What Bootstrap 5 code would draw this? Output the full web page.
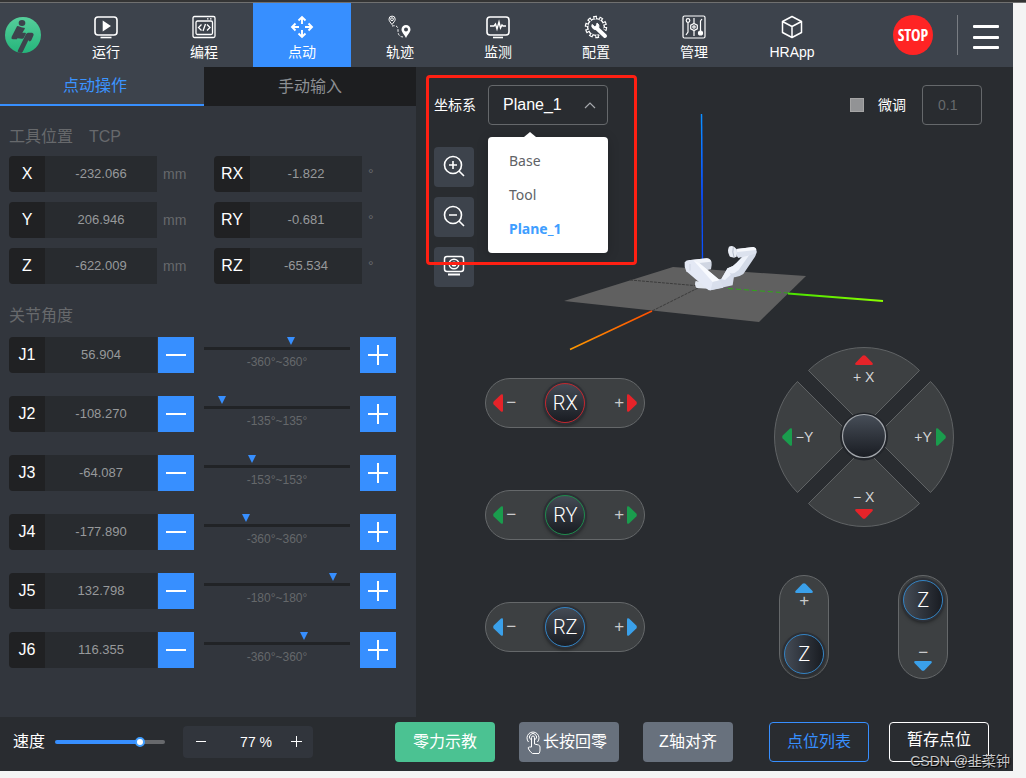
<!DOCTYPE html>
<html lang="zh-CN">
<head>
<meta charset="utf-8">
<meta name="viewport" content="width=device-width, initial-scale=1">
<title>点动</title>
<link href="https://cdn.jsdelivr.net/npm/bootstrap@5.3.0/dist/css/bootstrap.min.css" rel="stylesheet">
<style>
:root{--blue:#378fff;--bar:#3d434c;--side:#32363d;--stage:#292c30;--ink:#202123;--field:#282b2f}
body{background:#f4f4f4;font-family:"Liberation Sans","Noto Sans CJK SC",sans-serif;font-size:14px;line-height:20px;color:#fff}
button{font-family:inherit;color:inherit;border:0;background:none;padding:0}
svg{display:block}
.frame-top{height:3px;background:#343434;border-bottom:1px solid #707070}
.app{margin-right:13px;background:var(--stage)}
.topbar{height:64px;background:var(--bar);padding:0 14px 0 5px}
.topnav{margin-left:16px}
.topnav a{width:98px;height:64px;padding-top:12px;gap:3px;color:#fff;text-decoration:none}
.topnav a.on{background:var(--blue)}
.stop{width:40px;height:40px;border-radius:50%;background:#ff2424;font:bold 16px/40px "Liberation Sans Narrow","Open Sans Condensed","Roboto Condensed","Noto Sans",sans-serif;margin-right:24px}
.rule{width:1px;height:40px;background:#797d83;margin-right:15px}
.burger{width:26px;height:24px}
.burger i{height:3px;border-radius:1px;background:#fff}
.side{width:416px;background:var(--side);padding-bottom:49px}
.tabs button{height:39px;font-size:16px;background:#1d1e20;color:#8d9094;flex:1}
.tabs button.on{flex:0 0 204px;background:var(--bar);color:#3b94ff;border-bottom:2px solid var(--blue);padding-right:14px}
.side-body{padding:0 20px 0 9px}
.sec{font-size:16px;line-height:20px;color:#67696c;margin:21px 0 9px;font-weight:400}
.tcp + .sec{margin:22px 0 11px}
.tcp{display:grid;grid-template-columns:205px 1fr;row-gap:10px}
.axis{width:36px;height:36px;line-height:35px;font-size:16px;text-align:center;background:var(--ink);border-radius:4px 0 0 4px}
.val{width:112px;height:36px;border:0;border-radius:0;background:var(--field);color:#97999b;font-size:13px;text-align:center;padding:0 0 2px}
.unit{color:#67696c;margin-left:6px}
.joints{display:flex;flex-direction:column;gap:23px}
.step{width:36px;height:36px;background:var(--blue)}
.val + .step{margin-left:1px}
.meter{flex:1;margin:0 10px;height:36px;padding-top:10px;font-size:12px;line-height:16px;color:#65686b;text-align:center;position:relative}
.meter::before{content:"";display:block;height:3px;background:#212326;margin-bottom:4px}
.meter i{position:absolute;top:0;margin-left:-4px;border:4px solid transparent;border-top:8px solid var(--blue);border-bottom:0}
.stage{position:relative;min-width:0}
.stage-top{padding:18px 31px 0 18px}
.frame{width:120px;height:40px;border:1px solid #65686b;border-radius:4px;background-color:transparent;color:#fff;font-size:16px;padding:0 14px;appearance:none}
.cs{background:url("data:image/svg+xml,%3Csvg xmlns='http://www.w3.org/2000/svg' width='12' height='8'%3E%3Cpath d='M1 7l5-5 5 5' fill='none' stroke='%23a5a8ac' stroke-width='1.2'/%3E%3C/svg%3E") no-repeat right 11px center}
.fine{width:60px;font-size:14px;color:#67696c;padding:0 15px}
.tick{appearance:none;width:14px;height:14px;background:#929395;border:1px solid #a5a5a5;margin:0 14px 0 0}
.pop{position:absolute;top:52px;left:0;width:120px;padding:7px 0;background:#fff;border-radius:4px;z-index:3;box-shadow:0 2px 12px #0003}
.pop::before{content:"";position:absolute;left:36px;top:-5px;border:6px solid transparent;border-top:0;border-bottom:5px solid #fff}
.pop button{height:34px;padding-left:21px;text-align:left;color:#606266;font-family:"Noto Sans","Noto Sans CJK SC",sans-serif}
.pop button.on{color:#409eff;font-weight:700}
.viewrow{padding:22px 18px 0;height:222px}
.tools{gap:10px}
.tool{width:40px;height:40px;border-radius:4px;background:var(--bar)}
.scene{margin-left:90px;overflow:visible}
.note{position:absolute;left:10px;top:8px;width:211px;height:190px;border:3px solid #ff2013;border-radius:4px;z-index:4;pointer-events:none}
.pill{width:160px;height:50px;border:1px solid #65686a;border-radius:25px;background:#3d4042;padding:0 7px}
.pill.up{width:50px;height:104px;padding:4px 0}
.pill button{color:#c9cacb;font-size:17px;line-height:16px;gap:3px}
.pill.up button{gap:0;padding:3px 0}
.knob{width:40px;height:40px;border-radius:50%;border:1px solid var(--c);background:linear-gradient(#444b55,#191c22);box-shadow:0 0 0 2px #2d3036,0 2px 4px #000a;font:300 20px/38px Roboto,"Liberation Sans",sans-serif;text-align:center}
.up .knob{background:linear-gradient(90deg,#444b55,#191c22)}
.r{--c:#c4262e;--a:#e62329}.g{--c:#1d8b4c;--a:#1a9c4d}.b{--c:#3283c4;--a:#3aa0ea}
.arr{fill:var(--a)}
.pads{gap:62px;padding-top:31px}
.dial{width:180px;height:180px;display:grid;grid-template:repeat(3,60px)/repeat(3,60px);position:relative}
.dial>svg{position:absolute;inset:0}
.dial button{position:relative;display:flex;align-items:center;color:#d4d5d6;font-size:14px;line-height:16px}
.zz{gap:69px;margin-top:48px}
.foot{height:54px;padding:0 24px 4px 13px}
.speed{appearance:none;width:110px;height:16px;background:none;margin:0 18px 0 10px}
.speed::-webkit-slider-runnable-track{height:4px;border-radius:2px;background:linear-gradient(90deg,var(--blue) 77%,#67696c 77%)}
.speed::-webkit-slider-thumb{appearance:none;width:10px;height:10px;margin-top:-3px;border:2px solid #409eff;border-radius:50%;background:#fff}
.count{width:130px;height:32px;border-radius:4px;background:#31353c}
.count button{width:34px;height:32px}
.count input{width:62px;border:0;background:none;color:#fff;text-align:right;padding:0 7px 0 0}
.acts{gap:24px}
.points{gap:20px;margin-left:36px}
.act{width:100px;height:40px;border-radius:4px;font-size:16px;background:#68717d;color:#fff}
.act.go{background:#4bc292}
.act.slim{width:90px}
.act.list{background:none;border:1px solid var(--blue);color:var(--blue)}
.act.save{background:none;border:1px solid #fff;padding-bottom:5px}
.mark-csdn{position:absolute;right:3px;bottom:0;color:#c3c4c6;text-shadow:1px 1px 1px #000}
</style>
</head>
<body>
<div class="frame-top"></div>
<div class="app position-relative">
<header class="topbar d-flex align-items-center">
  <svg width="36" height="36" viewBox="15 51 108 108"><defs><linearGradient id="lg" x2="0" y2="1"><stop stop-color="#56cf9b"/><stop offset="1" stop-color="#25b57b"/></linearGradient><clipPath id="lc"><circle cx="69" cy="105" r="54"/></clipPath></defs><circle cx="69" cy="105" r="54" fill="url(#lg)"/><g clip-path="url(#lc)" fill="#3d434c"><ellipse cx="66" cy="69" rx="10" ry="9"/><path d="M51 79Q53 77 56 79Q66 84 73 83Q76 84 74 87L67 98H76Q79 99 77 103L71 114Q69 117 65 116L52 115L51 118H38Q32 116 35 110z"/><path d="M84 98H96Q103 100 100 107L94 121Q91 125 88 124L85 121L68 156Q64 162 55 158Q52 155 54 151L77 104Q79 99 84 98z"/></g></svg>
  <nav class="topnav d-flex">
    <a href="#" class="d-flex flex-column align-items-center"><svg width="24" height="24" fill="none" stroke="#fff" stroke-width="1.6"><rect x="1" y="2" width="22" height="18" rx="3"/><path d="M9.5 7v8l6-4z" fill="#fff"/><path d="M6.500 22.500h11"/></svg><span>运行</span></a>
    <a href="#" class="d-flex flex-column align-items-center"><svg width="24" height="24" fill="none" stroke="#fff" stroke-width="1.3"><rect x="1" y="1.500" width="22" height="21" rx="1.500"/><rect x="4" y="6" width="16.500" height="13.500" rx="1.500"/><path d="M9.500 9.500l-3 3 3 3M15 9.500l3 3-3 3M13.500 9l-2.500 7M15 3.800h1.500M18 3.800h1.500"/></svg><span>编程</span></a>
    <a href="#" class="on d-flex flex-column align-items-center"><svg width="24" height="24" fill="none" stroke="#fff" stroke-width="1.900"><path d="M12 9V2M8.500 5.500L12 2l3.500 3.500M12 15v7M8.500 18.500L12 22l3.500-3.500M9 12H2M5.500 8.500L2 12l3.500 3.500M15 12h7M18.500 8.500L22 12l-3.500 3.500"/></svg><span>点动</span></a>
    <a href="#" class="d-flex flex-column align-items-center"><svg width="24" height="24" fill="none" stroke="#fff"><path d="M4 9.500C2.500 7.500 1 6 1 4.200a3 3 0 0 1 6.200 0C7.200 6 5.500 7.500 4 9.500z"/><circle cx="4" cy="4.200" r="1.400"/><path d="M4 11c5-1 6 1 6 4s0 7 6 7" stroke-dasharray="2.500 1.500"/><path d="M18 23c-2-4-4.500-6-4.500-8.500a4.500 4.500 0 0 1 9 0C22.500 17 20 19 18 23zm0-10.500a2 2 0 1 0 0 4 2 2 0 0 0 0-4z" fill="#fff" fill-rule="evenodd" stroke="none"/></svg><span>轨迹</span></a>
    <a href="#" class="d-flex flex-column align-items-center"><svg width="24" height="24" fill="none" stroke="#fff" stroke-width="1.600"><rect x="1" y="2" width="22" height="18" rx="3"/><path d="M4 11h4l1.500-2 1.500 5 2-7 1.500 6 1.500-3 1 1h3" stroke-width="1.400"/><path d="M7 22.500h10"/></svg><span>监测</span></a>
    <a href="#" class="d-flex flex-column align-items-center"><svg width="24" height="24" fill="none" stroke="#fff"><circle cx="12" cy="12" r="9.500" stroke-width="3.400" stroke-dasharray="3.600 2.370"/><circle cx="12" cy="12" r="8.400" stroke-width="1.400"/><circle cx="12" cy="12" r="8.800" stroke="#3d434c" stroke-width="2.400" stroke-dasharray="1.400 4.129" stroke-dashoffset="-1"/><path d="M14 14l9 8" stroke="#3d434c" stroke-width="7"/><path d="M12.500 13l8.500 8" stroke-width="4" stroke-linecap="round"/><path d="M8 9.500a3.800 3.800 0 0 0 5.500 4.500 3.500 3.500 0 0 0-.5-6l-.5 3-2 .5z" fill="#fff"/></svg><span>配置</span></a>
    <a href="#" class="d-flex flex-column align-items-center"><svg width="24" height="24" fill="none" stroke="#fff" stroke-width="1.200"><rect x="1" y="1" width="22" height="22" rx="1.500"/><circle cx="6" cy="5.500" r="1.800"/><path d="M6 7.500V17l-2 3M12 3v5M12 16v5M20 4l-1.500 2v10"/><path d="M12 8.500l3.300 1.700v3.600L12 15.500l-3.300-1.700v-3.600z"/><circle cx="12" cy="12" r="1.200"/><circle cx="18.500" cy="18" r="2" fill="#fff"/></svg><span>管理</span></a>
    <a href="#" class="d-flex flex-column align-items-center"><svg width="24" height="24" fill="none" stroke="#fff" stroke-width="1.500" stroke-linejoin="round"><path d="M12 1.500l9.500 5v11L12 22.500l-9.500-5v-11zM2.500 6.500l9.500 5 9.500-5M12 11.500v11"/></svg><span>HRApp</span></a>
  </nav>
  <button class="stop ms-auto">STOP</button>
  <div class="rule"></div>
  <button class="burger mt-1 d-flex flex-column justify-content-between" aria-label="菜单"><i class="w-100"></i><i class="w-100"></i><i class="w-100"></i></button>
</header>

<main class="d-flex">
<section class="side flex-shrink-0">
  <div class="tabs d-flex"><button class="on">点动操作</button><button>手动输入</button></div>
  <div class="side-body">
    <h2 class="sec">工具位置<span class="ms-3">TCP</span></h2>
    <div class="tcp">
      <div class="d-flex align-items-center"><label class="axis" for="x">X</label><input class="val" id="x" value="-232.066"><span class="unit">mm</span></div>
      <div class="d-flex align-items-center"><label class="axis" for="rx">RX</label><input class="val" id="rx" value="-1.822"><span class="unit">°</span></div>
      <div class="d-flex align-items-center"><label class="axis" for="y">Y</label><input class="val" id="y" value="206.946"><span class="unit">mm</span></div>
      <div class="d-flex align-items-center"><label class="axis" for="ry">RY</label><input class="val" id="ry" value="-0.681"><span class="unit">°</span></div>
      <div class="d-flex align-items-center"><label class="axis" for="z">Z</label><input class="val" id="z" value="-622.009"><span class="unit">mm</span></div>
      <div class="d-flex align-items-center"><label class="axis" for="rz">RZ</label><input class="val" id="rz" value="-65.534"><span class="unit">°</span></div>
    </div>
    <h2 class="sec">关节角度</h2>
    <svg width="0" height="0" class="position-absolute"><defs><symbol id="mi" viewBox="0 0 36 36"><path d="M8 18h20" stroke="#fff" stroke-width="2"/></symbol><symbol id="pl" viewBox="0 0 36 36"><path d="M8 18h20M18 8v20" stroke="#fff" stroke-width="2"/></symbol>
    <symbol id="al" viewBox="0 0 10 18"><path d="M10 1.500v15q0 2-2 1L.7 10.500q-1-1.500 0-3L8 .5q2-1 2 1z"/></symbol><symbol id="ar" viewBox="0 0 10 18"><path d="M0 1.500v15q0 2 2 1l7.300-7q1-1.500 0-3L2 .5q-2-1-2 1z"/></symbol><symbol id="au" viewBox="0 0 18 10"><path d="M1.500 10h15q2 0 1-2L10.500.7q-1.500-1-3 0L.5 8q-1 2 1 2z"/></symbol><symbol id="ad" viewBox="0 0 18 10"><path d="M1.500 0h15q2 0 1 2l-7 7.300q-1.500 1-3 0L.5 2q-1-2 1-2z"/></symbol></defs></svg>
    <div class="joints">
      <div class="d-flex"><label class="axis" for="j1">J1</label><input class="val" id="j1" value="56.904"><button class="step" aria-label="J1 减"><svg width="36" height="36"><use href="#mi"/></svg></button><div class="meter"><i style="left:59.4%"></i>-360°~360°</div><button class="step" aria-label="J1 加"><svg width="36" height="36"><use href="#pl"/></svg></button></div>
      <div class="d-flex"><label class="axis" for="j2">J2</label><input class="val" id="j2" value="-108.270"><button class="step" aria-label="J2 减"><svg width="36" height="36"><use href="#mi"/></svg></button><div class="meter"><i style="left:12.4%"></i>-135°~135°</div><button class="step" aria-label="J2 加"><svg width="36" height="36"><use href="#pl"/></svg></button></div>
      <div class="d-flex"><label class="axis" for="j3">J3</label><input class="val" id="j3" value="-64.087"><button class="step" aria-label="J3 减"><svg width="36" height="36"><use href="#mi"/></svg></button><div class="meter"><i style="left:32.7%"></i>-153°~153°</div><button class="step" aria-label="J3 加"><svg width="36" height="36"><use href="#pl"/></svg></button></div>
      <div class="d-flex"><label class="axis" for="j4">J4</label><input class="val" id="j4" value="-177.890"><button class="step" aria-label="J4 减"><svg width="36" height="36"><use href="#mi"/></svg></button><div class="meter"><i style="left:28.9%"></i>-360°~360°</div><button class="step" aria-label="J4 加"><svg width="36" height="36"><use href="#pl"/></svg></button></div>
      <div class="d-flex"><label class="axis" for="j5">J5</label><input class="val" id="j5" value="132.798"><button class="step" aria-label="J5 减"><svg width="36" height="36"><use href="#mi"/></svg></button><div class="meter"><i style="left:88.1%"></i>-180°~180°</div><button class="step" aria-label="J5 加"><svg width="36" height="36"><use href="#pl"/></svg></button></div>
      <div class="d-flex"><label class="axis" for="j6">J6</label><input class="val" id="j6" value="116.355"><button class="step" aria-label="J6 减"><svg width="36" height="36"><use href="#mi"/></svg></button><div class="meter"><i style="left:68.6%"></i>-360°~360°</div><button class="step" aria-label="J6 加"><svg width="36" height="36"><use href="#pl"/></svg></button></div>
    </div>
  </div>
</section>

<section class="stage flex-grow-1">
  <div class="stage-top d-flex align-items-center">
    <label for="cs">坐标系</label>
    <div class="position-relative ms-2 ps-1 me-auto"><div class="position-relative"><select id="cs" class="frame cs d-block"><option>Plane_1</option><option>Base</option><option>Tool</option></select>
      <div class="pop d-flex flex-column"><button>Base</button><button>Tool</button><button class="on">Plane_1</button></div></div></div>
    <input type="checkbox" id="ft" class="tick"><label for="ft" class="me-3">微调</label>
    <input class="frame fine" value="0.1" aria-label="微调步长">
  </div>
  <div class="viewrow d-flex">
    <div class="tools d-flex flex-column">
      <button class="tool" aria-label="放大"><svg width="40" height="40" fill="none" stroke="#fff" stroke-width="1.600"><circle cx="19" cy="18" r="8.500"/><path d="M25 24l5 5M15 18h8M19 14v8"/></svg></button>
      <button class="tool" aria-label="缩小"><svg width="40" height="40" fill="none" stroke="#fff" stroke-width="1.600"><circle cx="19" cy="18" r="8.500"/><path d="M25 24l5 5M15 18h8"/></svg></button>
      <button class="tool" aria-label="复位视角"><svg width="40" height="40" fill="none" stroke="#fff" stroke-width="1.500"><rect x="10.500" y="9.500" width="19" height="15" rx="2.500"/><circle cx="20" cy="17" r="4.800"/><circle cx="20" cy="17" r="1.800"/><path d="M14 27.500h12" stroke-width="2"/></svg></button>
    </div>
    <svg class="scene flex-shrink-0" width="320" height="205" viewBox="564 147 320 205">
      <defs><linearGradient id="zb" gradientUnits="userSpaceOnUse" x1="0" y1="114" x2="0" y2="258"><stop stop-color="#0b96ff"/><stop offset=".7" stop-color="#0a3cff"/><stop offset="1" stop-color="#0600ff"/></linearGradient><linearGradient id="gb" gradientUnits="userSpaceOnUse" x1="728" y1="0" x2="884" y2="0"><stop stop-color="#1fd000"/><stop offset="1" stop-color="#8cff00"/></linearGradient><linearGradient id="ob" gradientUnits="userSpaceOnUse" x1="652" y1="0" x2="570" y2="0"><stop stop-color="#ff4e00"/><stop offset="1" stop-color="#ff9a00"/></linearGradient></defs>
      <path d="M564 301L673 267L806 276L759 322z" fill="#606060"/>
      <path d="M630 280L700 286M698 288L652 311" stroke="#3c3c3c" stroke-dasharray="3 1" fill="none"/>
      <path d="M652 311L570 349.500" stroke="url(#ob)" stroke-width="1.500"/>
      <path d="M728 288.500L788 293" stroke="#2fa818" stroke-dasharray="5 3"/>
      <path d="M788 293.500L883 301" stroke="url(#gb)" stroke-width="1.800"/>
      <path d="M701.500 114L702.500 260" stroke="#0a50ff" stroke-width="1.300"/><path d="M701.500 114L702 200" stroke="url(#zb)" stroke-width="1.300"/>
      <g transform="translate(550 100) scale(.3333)">
        <path d="M437 543L475 550V566L440 564Q432 555 437 543z" fill="#e3e8f1"/>
        <path d="M415 481L470 475Q487 476 485 495L483 508L455 513L430 500z" fill="#d0d6e2"/><path d="M415 481L470 475Q480 476 483 485L440 490z" fill="#f0f3f9"/>
        <path d="M488 540L514 537L533 504L552 530L548 556L480 571z" fill="#d6dcea"/><path d="M514 537L533 504L545 522L525 540z" fill="#eef2f9"/>
        <path d="M533 505Q550 500 560 488L590 455L618 450Q622 458 615 470L580 522Q560 536 545 530z" fill="#d3dae7"/><path d="M533 505Q550 500 560 488L590 460L600 462L566 510Q550 525 538 518z" fill="#eef2fa"/>
        <path d="M560 447L610 441Q622 445 619 460L600 466L565 474Q552 460 560 447z" fill="#dce2ee"/><path d="M560 447L610 441Q619 443 619 450L562 456z" fill="#f6f8fc"/>
        <path d="M537 440Q545 436 553 441L560 448V470L552 473L540 470Q530 455 537 440z" fill="#e9edf5"/><path d="M550 442q-4 14 2 29" stroke="#b3bbc9" stroke-width="3" fill="none"/>
        <path d="M404 487Q410 477 430 481L448 489L508 540L485 569Q480 573 474 569L409 514Q402 500 404 487z" fill="#e4e9f5"/><path d="M430 481L448 489L510 541L488 546z" fill="#f8fafe"/><path d="M488 546L510 541L520 563L482 571z" fill="#d9dfec"/><path d="M420 492v20" stroke="#c8cfdc" stroke-width="2"/>
      </g>
    </svg>
  </div>
  <div class="row g-0">
    <div class="col-6 d-flex flex-column align-items-center pads">
      <div class="pill r d-flex align-items-center justify-content-between"><button class="d-flex align-items-center"><svg class="arr" width="10" height="18"><use href="#al"/></svg>−</button><div class="knob">RX</div><button class="d-flex align-items-center">+<svg class="arr" width="10" height="18"><use href="#ar"/></svg></button></div>
      <div class="pill g d-flex align-items-center justify-content-between"><button class="d-flex align-items-center"><svg class="arr" width="10" height="18"><use href="#al"/></svg>−</button><div class="knob">RY</div><button class="d-flex align-items-center">+<svg class="arr" width="10" height="18"><use href="#ar"/></svg></button></div>
      <div class="pill b d-flex align-items-center justify-content-between"><button class="d-flex align-items-center"><svg class="arr" width="10" height="18"><use href="#al"/></svg>−</button><div class="knob">RZ</div><button class="d-flex align-items-center">+<svg class="arr" width="10" height="18"><use href="#ar"/></svg></button></div>
    </div>
    <div class="col-6 d-flex flex-column align-items-center">
      <div class="dial">
        <svg width="180" height="180"><defs><linearGradient id="kn" x2="0" y2="1"><stop stop-color="#474e58"/><stop offset="1" stop-color="#191c22"/></linearGradient></defs><g fill="#3d4042" stroke="#606365"><path d="M90 79L34.500 23.500A78.500 78.500 0 0 1 145.500 23.500z"/><path d="M90 101L34.500 156.500A78.500 78.500 0 0 0 145.500 156.500z"/><path d="M79 90L23.500 34.500A78.500 78.500 0 0 0 23.500 145.500z"/><path d="M101 90L156.500 34.500A78.500 78.500 0 0 1 156.500 145.500z"/></g><circle cx="90" cy="89.500" r="24" fill="#22252a"/><circle cx="90" cy="89" r="21.500" fill="url(#kn)" stroke="#a2a6ab" stroke-width="1.200"/></svg>
        <span></span><button class="r flex-column pt-2"><svg class="arr mb-1" width="18" height="10"><use href="#au"/></svg><span>+ X</span></button><span></span>
        <button class="g ps-2"><svg class="arr me-1" width="10" height="18"><use href="#al"/></svg>−Y</button><span></span><button class="g pe-2 justify-content-end">+Y<svg class="arr ms-1" width="10" height="18"><use href="#ar"/></svg></button>
        <span></span><button class="r flex-column justify-content-end pb-2"><span class="pb-1">− X</span><svg class="arr" width="18" height="10"><use href="#ad"/></svg></button><span></span>
      </div>
      <div class="d-flex zz">
        <div class="pill up b d-flex flex-column align-items-center justify-content-between"><button class="d-flex flex-column align-items-center"><svg class="arr" width="18" height="10"><use href="#au"/></svg>+</button><div class="knob">Z</div></div>
        <div class="pill up b d-flex flex-column align-items-center justify-content-between"><div class="knob">Z</div><button class="d-flex flex-column align-items-center">−<svg class="arr" width="18" height="10"><use href="#ad"/></svg></button></div>
      </div>
    </div>
  </div>
  <div class="note"></div>
</section>
</main>

<footer class="foot d-flex align-items-center">
  <label for="sp" class="fs-6">速度</label><input type="range" id="sp" class="speed" value="80">
  <div class="count d-flex align-items-center"><button aria-label="减速"><svg width="34" height="32"><path d="M13 15.500h10" stroke="#fff"/></svg></button><input value="77 %" aria-label="速度值"><button aria-label="加速"><svg width="34" height="32"><path d="M12 15.500h11M17.500 10v11" stroke="#fff"/></svg></button></div>
  <div class="acts d-flex ms-auto">
    <button class="act go">零力示教</button>
    <button class="act d-flex align-items-center ps-1"><svg class="flex-shrink-0" width="20" height="26" viewBox="-2 0 20 26" fill="none" stroke="#fff"><path d="M3.500 13a6 6 0 1 1 9 0M5.500 10.500a3.500 3.500 0 1 1 5 0"/><path d="M6.500 18V8.500a1.500 1.500 0 0 1 3 0V15l4 1q1.500.5 1.500 2v3q0 2-1 3.500H7.500q-2-1-4-4.500-1-2 1-2z"/></svg>长按回零</button>
    <button class="act slim">Z轴对齐</button>
  </div>
  <div class="points d-flex">
    <button class="act list">点位列表</button>
    <button class="act save">暂存点位</button>
  </div>
  <span class="mark-csdn">CSDN @韭菜钟</span>
</footer>
</div>
<script src="https://cdn.jsdelivr.net/npm/bootstrap@5.3.0/dist/js/bootstrap.bundle.min.js"></script>
</body>
</html>
